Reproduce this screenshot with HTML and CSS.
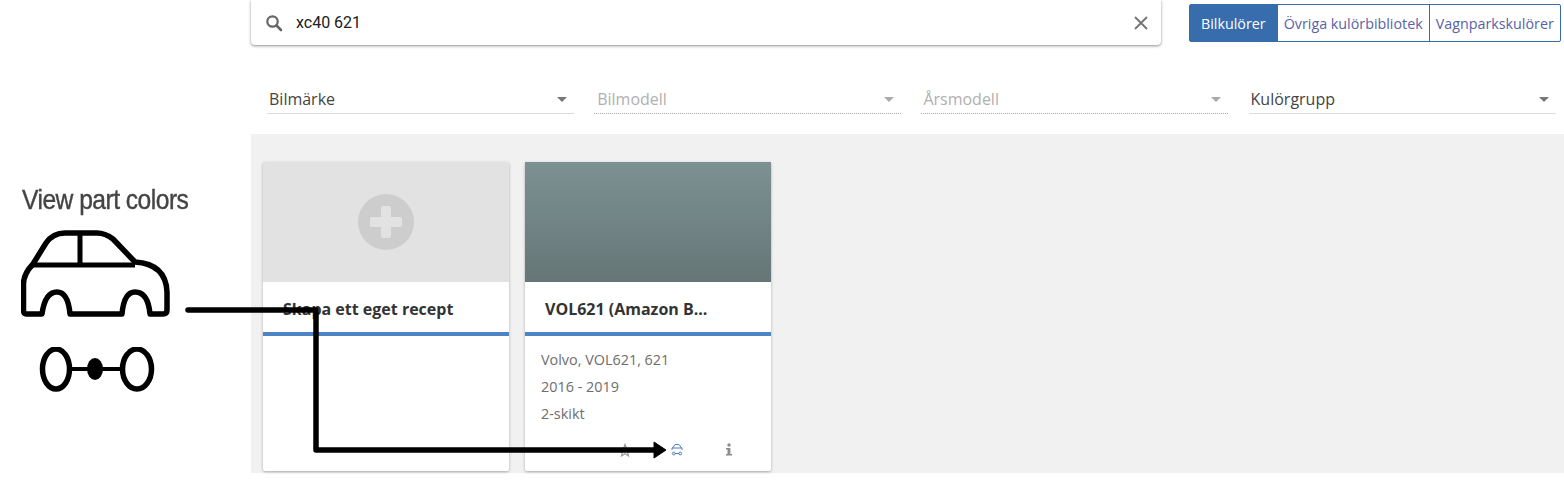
FILE: index.html
```html
<!DOCTYPE html>
<html>
<head>
    <title>Bilkulörer</title>
    <link rel="stylesheet" href="styles.css">
</head>
<body>
    <div class="page">
        <aside class="side"></aside>
        <main class="main">
            <div class="top-row">
                <div class="search">
                    <svg class="search-icon" width="18" height="18" viewBox="0 0 18 18"><circle cx="7.5" cy="7.500" r="5.200" fill="none" stroke="#666" stroke-width="2.200"/><path d="M11.500 11.500l4.500 4.500" stroke="#666" stroke-width="2.600" stroke-linecap="round"/></svg>
                    <span class="search-text">xc40 621</span>
                    <svg class="search-clear" width="14" height="14" viewBox="0 0 14 14"><path d="M1 1l12 12M13 1L1 13" stroke="#757575" stroke-width="1.9"/></svg>
                </div>
                <div class="tabs">
                    <div class="tab tab-active">Bilkulörer</div>
                    <div class="tab">Övriga kulörbibliotek</div>
                    <div class="tab">Vagnparkskulörer</div>
                </div>
            </div>
            <div class="filters">
                <div class="select"><span>Bilmärke</span><i class="caret"></i></div>
                <div class="select select-off"><span>Bilmodell</span><i class="caret"></i></div>
                <div class="select select-off"><span>Årsmodell</span><i class="caret"></i></div>
                <div class="select"><span>Kulörgrupp</span><i class="caret"></i></div>
            </div>
            <div class="panel">
                <div class="card">
                    <div class="card-img card-img-new">
                        <div class="plus"></div>
                    </div>
                    <div class="card-title">Skapa ett eget recept</div>
                </div>
                <div class="card">
                    <div class="card-img card-img-color"></div>
                    <div class="card-title card-title-color">VOL621 (Amazon B...</div>
                    <div class="card-body">
                        <p>Volvo, VOL621, 621</p>
                        <p>2016 - 2019</p>
                        <p>2-skikt</p>
                    </div>
                    <div class="card-actions">
                        <svg class="act-star" width="14" height="14" viewBox="0 0 14 14"><path d="M7 1.5l1.7 4.4 3.8.3-2.9 2.7.9 4-3.5-2.2-3.5 2.2.9-4-2.9-2.7 3.8-.3z" fill="none" stroke="#9a9a9a" stroke-width="1.2"/></svg>
                        <svg class="act-car" width="12" height="13" viewBox="0 0 12 13"><path d="M1 7V5.200L2 4.600 3.400 2.200C3.800 1.700 4.300 1.500 4.800 1.500h2.400c.5 0 1 .2 1.400.7L10 4.600l1 .6V7M1.500 5h9" fill="none" stroke="#3a6db0" stroke-width="0.9"/><circle cx="2.800" cy="10.500" r="1.400" fill="none" stroke="#3a6db0" stroke-width="0.9"/><circle cx="9.200" cy="10.500" r="1.400" fill="none" stroke="#3a6db0" stroke-width="0.9"/><path d="M4.200 10.500h3.600" stroke="#3a6db0" stroke-width="0.9"/></svg>
                        <svg class="act-info" width="8" height="13" viewBox="0 0 8 13"><circle cx="4" cy="2" r="1.7" fill="#8c8c8c"/><path d="M1 5h4.4v6H7v1.6H1V11h1.5V6.600H1z" fill="#8c8c8c"/></svg>
                    </div>
                </div>
            </div>
        </main>

        <!-- pasted annotation on top of the screenshot -->
        <div class="note">
            <div class="note-text">View part colors</div>
            <svg class="note-car" width="150" height="88" viewBox="0 0 150 88">
                <path d="M21 84 H5 Q2.500 84 2.500 80 V54 Q2.500 44 12 34 L25 13 Q32 3 44 3 H76 Q84 3 92 9 L114 32 Q145 34 146 62 V80 Q146 84 142 84 H129 Q127 62 114 62 Q103 62 101 84 H49 Q47 62 36 62 Q24 62 21 84 Z" fill="none" stroke="#000" stroke-width="5.500" stroke-linejoin="round"/>
                <path d="M12 35 H114 M59 3 V35" fill="none" stroke="#000" stroke-width="5"/>
            </svg>
            <svg class="note-link" width="116" height="48" viewBox="0 0 116 48">
                <ellipse cx="17" cy="22" rx="13.500" ry="20" fill="none" stroke="#000" stroke-width="5.500"/>
                <ellipse cx="98" cy="22" rx="14.500" ry="20" fill="none" stroke="#000" stroke-width="5.500"/>
                <path d="M30 22 H84" stroke="#000" stroke-width="4"/>
                <ellipse cx="56" cy="22" rx="8" ry="11"/>
            </svg>
        </div>
        <svg class="arrow" width="500" height="170" viewBox="0 0 500 170">
            <path d="M3 5 H131 V145 H470" fill="none" stroke="#000" stroke-width="5.500" stroke-linecap="round" stroke-linejoin="round"/>
            <path d="M469 137 L481 145 L469 153 Z" stroke="#000" stroke-width="1"/>
        </svg>
    </div>
</body>
</html>
```

FILE: styles.css
```css
body {
    margin: 0;
    background-color: #fff;
    font-family: 'Open Sans', sans-serif;
    color: #333;
}

.page {
    position: relative;
    display: flex;
    width: 1564px;
    height: 499px;
    overflow: hidden;
}

.side {
    width: 251px;
    flex-shrink: 0;
}

.main {
    flex: 1;
    display: flex;
    flex-direction: column;
}

.top-row {
    display: flex;
    align-items: flex-start;
    gap: 28px;
    height: 85px;
}

.search {
    width: 910px;
    height: 45px;
    display: flex;
    align-items: center;
    padding: 0 13px 0 14px;
    box-sizing: border-box;
    background-color: #fff;
    border-radius: 0 0 4px 4px;
    box-shadow: 0 1px 3px rgba(0, 0, 0, 0.45);
}

.search-icon {
    flex-shrink: 0;
}

.search-text {
    flex: 1;
    margin-left: 13px;
    font-family: Roboto, sans-serif;
    font-size: 16px;
    color: #212121;
}

.tabs {
    display: flex;
    margin-top: 4px;
    height: 38px;
    border: 1px solid #376cad;
    border-radius: 2px;
    box-sizing: border-box;
}

.tab {
    display: flex;
    align-items: center;
    padding: 0 6px;
    font-size: 14.300px;
    color: #5a5fa8;
    border-left: 1px solid #376cad;
}

.tab:first-child {
    border-left: none;
}

.tab-active {
    padding: 0 11px;
    background-color: #376cad;
    color: #fff;
}

.filters {
    display: flex;
    gap: 20.200px;
    padding: 0 8px 0 16px;
    height: 49px;
}

.select {
    width: 307px;
    height: 29px;
    display: flex;
    align-items: center;
    justify-content: space-between;
    padding: 0 7px 0 2px;
    box-sizing: border-box;
    border-bottom: 1px solid #ddd;
    font-size: 16px;
    color: #444;
}

.select-off {
    color: #b0b0b0;
    border-bottom: 1px dotted #aaa;
}

.select-off:nth-child(2) {
    padding-left: 3px;
}

.caret {
    width: 0;
    height: 0;
    border-left: 5px solid transparent;
    border-right: 5px solid transparent;
    border-top: 5px solid #777;
}

.select-off .caret {
    border-top-color: #aaa;
}

.panel {
    height: 339px;
    display: flex;
    gap: 16px;
    align-items: flex-start;
    padding: 28px 0 0 12px;
    box-sizing: border-box;
    background-color: #f1f1f1;
}

.card {
    position: relative;
    width: 246px;
    height: 309px;
    background-color: #fff;
    border-radius: 2px;
    box-shadow: 0 1px 3px rgba(0, 0, 0, 0.3);
}

.card-img {
    height: 120px;
    display: flex;
    align-items: center;
    justify-content: center;
}

.card-img-new {
    background-color: #e2e2e2;
}

.card-img-color {
    background: linear-gradient(#7d9192, #667677);
}

.plus {
    position: relative;
    width: 56px;
    height: 56px;
    border-radius: 50%;
    background-color: #cdcdcd;
}

.plus::before,
.plus::after {
    content: "";
    position: absolute;
    background-color: #e2e2e2;
    border-radius: 2px;
}

.plus::before {
    left: 12px;
    top: 23px;
    width: 32px;
    height: 10px;
}

.plus::after {
    left: 23px;
    top: 12px;
    width: 10px;
    height: 32px;
}

.card-title {
    height: 54px;
    padding: 16px 20px 0;
    box-sizing: border-box;
    border-bottom: 4px solid #4f84c4;
    font-size: 16px;
    font-weight: 700;
    line-height: 22px;
    color: #333;
}

.card-body {
    padding: 10px 16px;
    font-size: 14.400px;
    color: #6e6e6e;
}

.card-body p {
    margin: 0;
    line-height: 27px;
}

.card-actions {
    position: absolute;
    left: 0;
    top: 280px;
    width: 100%;
    height: 16px;
}

.card-actions svg {
    position: absolute;
    top: 1px;
}

.act-star {
    left: 93px;
}

.act-car {
    left: 146px;
}

.act-info {
    left: 200px;
}

.note {
    position: absolute;
    left: 0;
    top: 0;
}

.note-text {
    position: absolute;
    left: 22px;
    top: 184px;
    white-space: nowrap;
    font-family: 'Liberation Sans', Arial, sans-serif;
    font-size: 28px;
    line-height: 32px;
    letter-spacing: -0.6px;
    transform: scaleX(0.88);
    transform-origin: left;
    color: #444;
    -webkit-text-stroke: 0.4px #444;
    filter: blur(0.7px);
}

.note-car {
    position: absolute;
    left: 21px;
    top: 230px;
    filter: blur(0.6px);
}

.note-link {
    position: absolute;
    left: 39px;
    top: 347px;
    filter: blur(0.6px);
}

.arrow {
    position: absolute;
    left: 185px;
    top: 305px;
}
```
